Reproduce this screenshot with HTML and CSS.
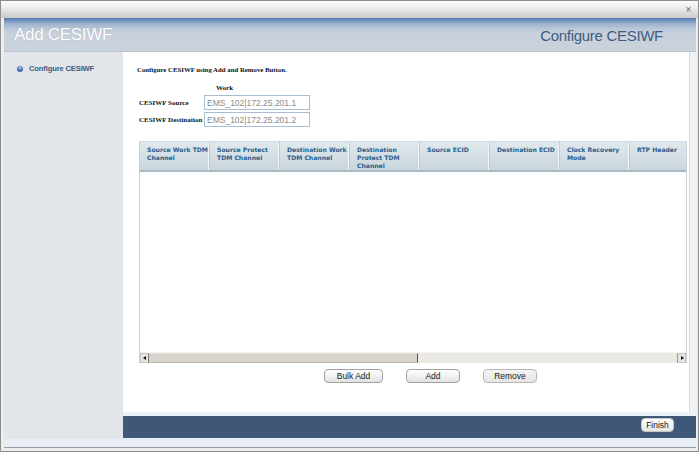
FILE: index.html
```html
<!DOCTYPE html>
<html>
<head>
<meta charset="utf-8">
<title>Add CESIWF</title>
<link rel="stylesheet" href="styles.css">
</head>
<body>
<div class="window">
  <div class="titlebar"><span class="close">×</span></div>
  <div class="dialog">
    <div class="header">
      <h1 class="title">Add CESIWF</h1>
      <h2 class="subtitle">Configure CESIWF</h2>
    </div>
    <div class="main">
      <aside class="sidebar">
        <div class="step"><span class="dot"></span>Configure CESIWF</div>
      </aside>
      <div class="work">
        <section class="panel">
          <p class="intro">Configure CESIWF using Add and Remove Button.</p>
          <div class="colhead">Work</div>
          <div class="formrow"><label class="lbl">CESIWF Source</label><input class="field" type="text" value="EMS_102|172.25.201.1"></div>
          <div class="formrow"><label class="lbl">CESIWF Destination</label><input class="field" type="text" value="EMS_102|172.25.201.2"></div>
          <div class="grid">
            <div class="grid-view">
              <div class="thead">
                <div class="th">Source Work TDM<br>Channel</div>
                <div class="th">Source Protect<br>TDM Channel</div>
                <div class="th">Destination Work<br>TDM Channel</div>
                <div class="th">Destination<br>Protect TDM<br>Channel</div>
                <div class="th">Source ECID</div>
                <div class="th">Destination ECID</div>
                <div class="th">Clock Recovery<br>Mode</div>
                <div class="th th-last">RTP Header</div>
              </div>
              <div class="tbody"></div>
            </div>
            <div class="hscroll">
              <span class="arrow arrow-left"></span>
              <span class="track"><span class="thumb"></span></span>
              <span class="arrow arrow-right"></span>
            </div>
          </div>
          <div class="actions">
            <button class="btn btn-bulk">Bulk Add</button>
            <button class="btn btn-add">Add</button>
            <button class="btn btn-remove">Remove</button>
          </div>
        </section>
        <footer class="footer"><button class="finish">Finish</button></footer>
      </div>
    </div>
    <div class="bottom-strip"></div>
  </div>
</div>
</body>
</html>
```
FILE: styles.css
```css
* { box-sizing: border-box; }
html, body { margin: 0; padding: 0; }
body { width: 699px; height: 452px; overflow: hidden; font-family: "Liberation Sans", Arial, sans-serif; background: #f2f2f2; }

.window {
  width: 699px; height: 452px;
  border: 1px solid #8e8e8e;
  background: #ededed;
  display: flex; flex-direction: column;
}
.titlebar {
  height: 17px; flex: none;
  background: linear-gradient(to bottom, #fbfbfb 0%, #efefef 35%, #d2d2d2 85%, #c9c9c9 100%);
  display: flex; justify-content: flex-end; align-items: center;
  padding-right: 5px;
}
.close {
  font-size: 10px; line-height: 10px; color: #6a6a6a;
  width: 9px; height: 10px; text-align: center;
}
.dialog { margin: 0 2px 0 3px; display: flex; flex-direction: column; min-width: 0; }

.header {
  height: 34px; flex: none;
  display: flex; align-items: center; justify-content: space-between;
  padding: 1px 33px 0 10px;
  background: linear-gradient(to bottom, #5479b3 0px, #6c8cbd 2px, #9fb3cf 6px, #bcc8d8 11px, #c8d1dc 16px, #cad2dc 100%);
  border-bottom: 1px solid #b6c2ce;
}
.title {
  margin: 0; font-weight: normal; font-size: 17px; color: #ffffff;
  letter-spacing: -0.3px;
  text-shadow: 0 0 1px rgba(80,100,130,0.4);
}
.subtitle {
  margin: 0; font-weight: normal; font-size: 15px; color: #3f5b82;
  letter-spacing: -0.3px;
}

.main { display: flex; height: 387px; background: #edf2f7; min-width: 0; }
.sidebar {
  width: 119px; flex: none;
  background: #e2e6ea;
  padding: 12px 0 0 13px;
}
.step {
  display: flex; align-items: center;
  font-size: 7.6px; font-weight: bold; color: #3d5a82;
  letter-spacing: -0.15px;
}
.dot {
  width: 6px; height: 6px; border-radius: 50%;
  background: radial-gradient(circle at 50% 30%, #c8dbf5 0, #6b93cf 1.5px, #3f69ad 3px);
  margin-right: 6px;
}

.work { flex: 1; min-width: 0; display: flex; flex-direction: column; }
.panel {
  flex: 1; min-width: 0;
  background: #ffffff;
  margin: 0 6px 4px 0;
  border-right: 1px solid #d2dae3;
  padding: 13px 0 0 14px;
  display: flex; flex-direction: column;
}
.intro {
  margin: 0; font-family: "Liberation Serif", "Times New Roman", serif;
  font-weight: bold; font-size: 6.8px; line-height: 10px; color: #111;
}
.colhead {
  margin: 8px 0 0 79px;
  font-family: "Liberation Serif", "Times New Roman", serif;
  font-weight: bold; font-size: 7px; line-height: 10px; color: #111;
}
.formrow { display: flex; align-items: center; margin: 2px 0 0 2px; height: 15px; }
.lbl {
  width: 65px; flex: none;
  font-family: "Liberation Serif", "Times New Roman", serif;
  font-weight: bold; font-size: 7px; color: #111;
}
.field {
  width: 106px; height: 15px;
  border: 1px solid #a9bdd3; padding: 0 0 0 2px;
  font-family: "Liberation Sans", Arial, sans-serif; font-size: 8.5px; color: #8b8b8b;
  background: #fff; outline: none;
}

.grid {
  margin: 14px 2px 0 2px; min-width: 0;
  border-left: 1px solid #c9d2da;
  border-right: 1px solid #c9d2da;
}
.grid-view { overflow: hidden; }
.thead {
  display: flex; height: 31px;
  background: linear-gradient(to bottom, #e0e8ec 0%, #d3dde3 60%, #c9d5dc 100%);
  border-top: 1px solid #d4dde3;
  border-bottom: 2px solid #a9bac6;
}
.th {
  width: 70px; flex: none;
  padding: 4px 2px 0 7px;
  font-family: "DejaVu Sans", Verdana, sans-serif;
  font-weight: bold; font-size: 6.1px; line-height: 8px; color: #2a5f8c;
  border-right: 1px solid #bdccd5;
  box-shadow: inset -1px 0 0 #eef3f6;
  white-space: nowrap;
}
.th-last { flex: 1; min-width: 0; border-right: 0; box-shadow: none; }
.tbody { height: 180px; background: #fff; }

.hscroll { display: flex; height: 11px; background: #ebe9e4; border-top: 1px solid #f4f3f0; }
.arrow {
  width: 9px; flex: none; position: relative;
  background: #e7e5df;
  border: 1px solid #c9c6bf;
}
.arrow-left { border-right: 1px solid #7a7a7a; }
.arrow-right { border-left: 1px solid #9a9a9a; }
.arrow::after {
  content: ""; position: absolute; top: 2px; width: 0; height: 0;
  border-top: 2.5px solid transparent; border-bottom: 2.5px solid transparent;
}
.arrow-left::after { left: 2px; border-right: 3px solid #111; }
.arrow-right::after { left: 3px; border-left: 3px solid #111; }
.track { flex: 1; display: flex; }
.thumb {
  width: 269px; background: #d8d4cc;
  border-top: 1px solid #e4e1da; border-bottom: 1px solid #bdb9b1;
  border-right: 1px solid #585858;
}

.actions { display: flex; gap: 23px; margin: 6px 0 0 187px; }
.btn {
  height: 14px; padding: 0;
  border: 1px solid #a3a3a3; border-radius: 4px;
  background: linear-gradient(to bottom, #fdfdfd 0%, #f1f1f1 50%, #e2e2e2 100%);
  font-family: "Liberation Sans", Arial, sans-serif; font-size: 8.5px; color: #1a1a1a;
  line-height: 12px;
}
.btn-bulk { width: 59px; }
.btn-add { width: 54px; }
.btn-remove { width: 54px; border-color: #b8b8b8; background: linear-gradient(to bottom, #f4f4f4, #e4e4e4); }

.footer {
  height: 22px; flex: none; margin-bottom: 1px;
  background: #3f5877;
  display: flex; justify-content: flex-end; align-items: flex-start;
  padding: 2px 22px 0 0;
}
.finish {
  width: 33px; height: 14px; padding: 0;
  border: 1px solid #c7c7c7; border-radius: 4px;
  background: linear-gradient(to bottom, #ffffff, #e6e6e6);
  font-family: "Liberation Sans", Arial, sans-serif; font-size: 8.5px; color: #1a1a1a;
  line-height: 12px;
}
.bottom-strip {
  height: 9px; background: #e6edf5;
  border-bottom: 1px solid #9c9c9c;
}
```
